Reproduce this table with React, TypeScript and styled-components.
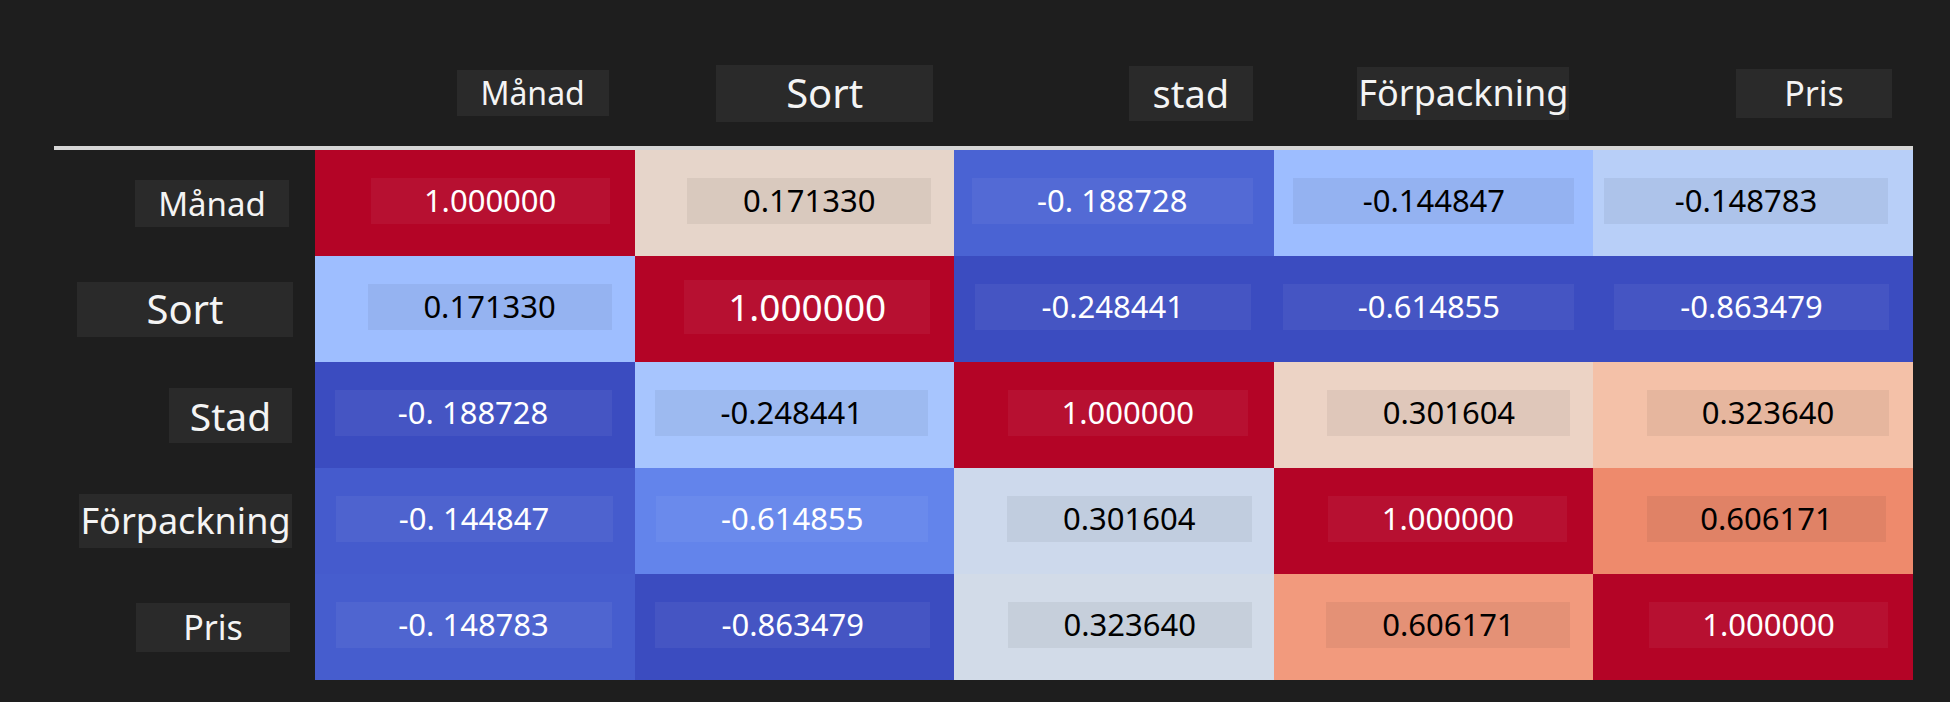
import React from 'react';
import styled, { createGlobalStyle } from 'styled-components';

/* ── Global ── */
const GlobalStyle = createGlobalStyle`
  html, body {
    margin: 0;
    padding: 0;
    background: #1e1e1e;
  }
  body {
    font-family: "Noto Sans", "Open Sans", "Liberation Sans", sans-serif;
    color: #ffffff;
  }
`;

const RED = '#b40426';

type Label = { text: string; w: number; h: number; size: number; pr: number };
type Cell = { text: string; bg: string; w: number; pr: number; big?: boolean };

const columns: Label[] = [
  { text: 'Månad', w: 152, h: 46, size: 32, pr: 26 },
  { text: 'Sort', w: 217, h: 57, size: 40, pr: 21 },
  { text: 'stad', w: 124, h: 55, size: 38, pr: 21 },
  { text: 'Förpackning', w: 212, h: 53, size: 36, pr: 24 },
  { text: 'Pris', w: 156, h: 49, size: 34, pr: 21 },
];

const rowLabels: Label[] = [
  { text: 'Månad', w: 154, h: 47, size: 33, pr: 26 },
  { text: 'Sort', w: 216, h: 55, size: 40, pr: 22 },
  { text: 'Stad', w: 123, h: 55, size: 39, pr: 23 },
  { text: 'Förpackning', w: 213, h: 54, size: 36, pr: 23 },
  { text: 'Pris', w: 154, h: 49, size: 34, pr: 25 },
];

const rows: Cell[][] = [
  [
    { text: '1.000000', bg: RED, w: 239, pr: 25 },
    { text: '0.171330', bg: '#e6d5ca', w: 244, pr: 23 },
    { text: '-0. 188728', bg: '#4a63d3', w: 281, pr: 21 },
    { text: '-0.144847', bg: '#9dbdff', w: 281, pr: 19 },
    { text: '-0.148783', bg: '#b8cff8', w: 284, pr: 25 },
  ],
  [
    { text: '0.171330', bg: '#9ebeff', w: 244, pr: 23 },
    { text: '1.000000', bg: RED, w: 246, pr: 24, big: true },
    { text: '-0.248441', bg: '#3b4cc0', w: 276, pr: 23 },
    { text: '-0.614855', bg: '#3b4cc0', w: 291, pr: 19 },
    { text: '-0.863479', bg: '#3b4cc0', w: 275, pr: 24 },
  ],
  [
    { text: '-0. 188728', bg: '#3b4cc0', w: 277, pr: 23 },
    { text: '-0.248441', bg: '#a7c5fe', w: 273, pr: 26 },
    { text: '1.000000', bg: RED, w: 240, pr: 26 },
    { text: '0.301604', bg: '#ecd3c5', w: 243, pr: 23 },
    { text: '0.323640', bg: '#f4c1a8', w: 242, pr: 24 },
  ],
  [
    { text: '-0. 144847', bg: '#455bcd', w: 277, pr: 22 },
    { text: '-0.614855', bg: '#6384eb', w: 272, pr: 26 },
    { text: '0.301604', bg: '#cdd9ec', w: 245, pr: 22 },
    { text: '1.000000', bg: RED, w: 239, pr: 26 },
    { text: '0.606171', bg: '#ee8a6c', w: 239, pr: 27 },
  ],
  [
    { text: '-0. 148783', bg: '#465dce', w: 276, pr: 23 },
    { text: '-0.863479', bg: '#3b4cc0', w: 275, pr: 24 },
    { text: '0.323640', bg: '#d2dbe8', w: 244, pr: 22 },
    { text: '0.606171', bg: '#f29a7d', w: 244, pr: 23 },
    { text: '1.000000', bg: RED, w: 239, pr: 25 },
  ],
];

// white text on saturated / dark cells, black on the pale ones
const isDark = (hex: string) => {
  const n = parseInt(hex.slice(1), 16);
  const r = (n >> 16) & 255;
  const g = (n >> 8) & 255;
  const b = n & 255;
  return 0.299 * r + 0.587 * g + 0.114 * b < 150;
};

/* ── Layout ── */
const Page = styled.div`
  width: 1950px;
  height: 702px;
  box-sizing: border-box;
  padding: 0 37px 0 54px;
  background: #1e1e1e;
  overflow: hidden;
`;

const Grid = styled.div`
  display: grid;
  grid-template-columns: 261px repeat(5, 1fr);
`;

const HeaderCell = styled.div<{ $pr: number }>`
  height: 146px;
  box-sizing: border-box;
  padding: 40px ${({ $pr }) => $pr}px 0 0;
  display: flex;
  align-items: center;
  justify-content: flex-end;
`;

const Divider = styled.div`
  grid-column: 1 / -1;
  height: 4px;
  background: #d6d6d6;
`;

const RowHead = styled.div<{ $pr: number }>`
  height: 106px;
  box-sizing: border-box;
  padding-right: ${({ $pr }) => $pr}px;
  display: flex;
  align-items: center;
  justify-content: flex-end;
`;

const LabelBox = styled.div<{ $w: number; $h: number; $size: number }>`
  width: ${({ $w }) => $w}px;
  height: ${({ $h }) => $h}px;
  background: #2a2a2a;
  color: #f4f4f4;
  font-size: ${({ $size }) => $size}px;
  display: flex;
  align-items: center;
  justify-content: center;
  white-space: nowrap;
  line-height: 1;
`;

const ValueCell = styled.div<{ $bg: string; $pr: number }>`
  height: 106px;
  box-sizing: border-box;
  background: ${({ $bg }) => $bg};
  padding: 0 ${({ $pr }) => $pr}px 5px 0;
  display: flex;
  align-items: center;
  justify-content: flex-end;
`;

const ValueBox = styled.div<{ $w: number; $dark: boolean; $big?: boolean }>`
  width: ${({ $w }) => $w}px;
  height: ${({ $big }) => ($big ? 54 : 46)}px;
  background: ${({ $dark }) => ($dark ? 'rgba(255,255,255,0.05)' : 'rgba(0,0,0,0.055)')};
  color: ${({ $dark }) => ($dark ? '#ffffff' : '#000000')};
  font-size: ${({ $big }) => ($big ? 37 : 31)}px;
  display: flex;
  align-items: center;
  justify-content: center;
  white-space: pre;
  line-height: 1;
`;

/* ── Component ── */
export default function App() {
  return (
    <>
      <GlobalStyle />
      <Page>
        <Grid>
          <HeaderCell $pr={0} />
          {columns.map((c) => (
            <HeaderCell key={c.text} $pr={c.pr}>
              <LabelBox $w={c.w} $h={c.h} $size={c.size}>{c.text}</LabelBox>
            </HeaderCell>
          ))}

          <Divider />

          {rows.map((row, i) => (
            <React.Fragment key={i}>
              <RowHead $pr={rowLabels[i].pr}>
                <LabelBox $w={rowLabels[i].w} $h={rowLabels[i].h} $size={rowLabels[i].size}>
                  {rowLabels[i].text}
                </LabelBox>
              </RowHead>
              {row.map((cell, j) => (
                <ValueCell key={j} $bg={cell.bg} $pr={cell.pr}>
                  <ValueBox $w={cell.w} $dark={isDark(cell.bg)} $big={cell.big}>
                    {cell.text}
                  </ValueBox>
                </ValueCell>
              ))}
            </React.Fragment>
          ))}
        </Grid>
      </Page>
    </>
  );
}
